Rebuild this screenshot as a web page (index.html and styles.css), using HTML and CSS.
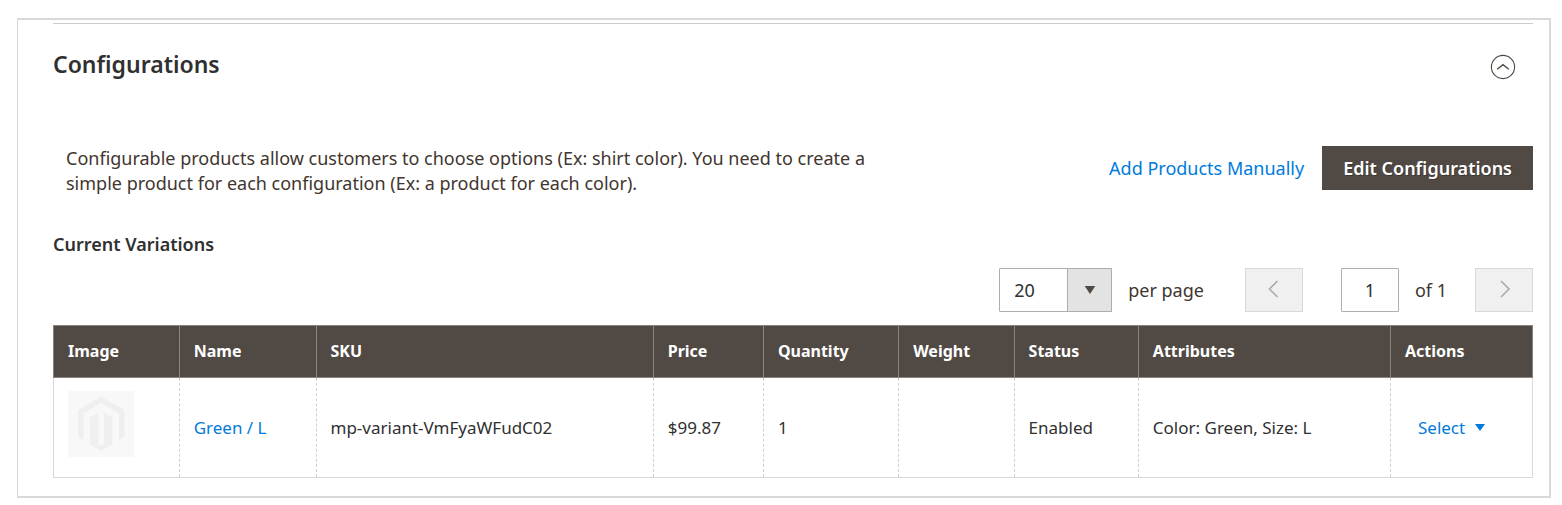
FILE: index.html
```html
<!DOCTYPE html>
<html lang="en">
<head>
<meta charset="utf-8">
<title>Configurations</title>
<meta name="viewport" content="width=device-width, initial-scale=1">
<link rel="stylesheet" href="styles.css">
</head>
<body>
<main class="panel">
  <section class="section">
    <header class="section-header">
      <h1 class="section-title">Configurations</h1>
      <button class="collapse" type="button" aria-label="Collapse section" aria-expanded="true">
        <svg width="26" height="26" viewBox="0 0 26 26" fill="none" stroke="#514943">
          <circle cx="13" cy="13" r="11.6" stroke-width="1.1"/>
          <path d="M7.2 15.3 13 10.6l5.8 4.7" stroke-width="1.4"/>
        </svg>
      </button>
    </header>

    <div class="intro">
      <p class="intro-text">Configurable products allow customers to choose options (Ex: shirt color). You need to create a simple product for each configuration (Ex: a product for each color).</p>
      <div class="intro-actions">
        <button class="link-button" type="button">Add Products Manually</button>
        <button class="dark-button" type="button">Edit Configurations</button>
      </div>
    </div>

    <h2 class="subtitle">Current Variations</h2>

    <div class="toolbar">
      <div class="page-size">
        <div class="select-wrap">
          <select class="select" id="page-size">
            <option>20</option>
            <option>30</option>
            <option>50</option>
          </select>
          <span class="select-arrow"><svg width="12" height="8" viewBox="0 0 12 8"><path d="M.7 0h10.6L6 8z" fill="#514943"/></svg></span>
        </div>
        <label for="page-size">per page</label>
      </div>
      <div class="pager">
        <button class="page-button" type="button" aria-label="Previous page" disabled>
          <svg width="12" height="20" viewBox="0 0 12 20" fill="none" stroke="#adadad" stroke-width="1.7"><path d="M9.500 1 1.500 9l8 8"/></svg>
        </button>
        <div class="page-current">
          <input class="page-input" id="page" type="text" value="1">
          <label for="page">of 1</label>
        </div>
        <button class="page-button" type="button" aria-label="Next page" disabled>
          <svg width="12" height="20" viewBox="0 0 12 20" fill="none" stroke="#adadad" stroke-width="1.7"><path d="M3 1 11 9l-8 8"/></svg>
        </button>
      </div>
    </div>

    <table class="grid">
      <colgroup>
        <col class="col-image"><col class="col-name"><col class="col-sku"><col class="col-price"><col class="col-quantity"><col class="col-weight"><col class="col-status"><col class="col-attributes"><col class="col-actions">
      </colgroup>
      <thead>
        <tr><th>Image</th><th>Name</th><th>SKU</th><th>Price</th><th>Quantity</th><th>Weight</th><th>Status</th><th>Attributes</th><th>Actions</th></tr>
      </thead>
      <tbody>
        <tr>
          <td class="cell-image">
            <svg class="thumb" width="66" height="66" viewBox="0 0 66 66" role="img" aria-label="Product placeholder">
              <path d="M0 0h66v66H0z" fill="#f8f8f8"/>
              <path d="M33 5.500 56.500 19v26.500L51 49V22.500L33 12 15.500 22.500V49L10 45.500V19z" fill="#efefef"/>
              <path d="M22 26.500 30.500 21.500V53l3 1.500 2.500-1.500V21.500L44.500 26.500V53.500L33 60 22 53.500z" fill="#efefef"/>
            </svg>
          </td>
          <td><a class="link" href="#">Green / L</a></td>
          <td>mp-variant-VmFyaWFudC02</td>
          <td>$99.87</td>
          <td>1</td>
          <td></td>
          <td>Enabled</td>
          <td>Color: Green, Size: L</td>
          <td class="cell-actions">
            <button class="action-select" type="button">Select
              <svg width="10" height="7" viewBox="0 0 10 7"><path d="M0 0h10L5 7z" fill="#007bdb"/></svg>
            </button>
          </td>
        </tr>
      </tbody>
    </table>
  </section>
</main>
</body>
</html>
```
FILE: styles.css
```css
* {
  box-sizing: border-box;
}

body {
  margin: 0;
  padding: 18px 11px 7px 17px;
  background: #fff;
  color: #41362f;
  font-family: "Noto Sans", "Open Sans", sans-serif;
  font-size: 18px;
  line-height: 25px;
}

button,
input,
select {
  font: inherit;
  color: inherit;
}

button {
  padding: 0;
  border: 0;
  background: none;
  cursor: pointer;
}

svg {
  display: block;
}

.panel {
  padding: 3px 16px 18px 35px;
  border: 2px solid #d9d9d9;
  border-left-width: 1px;
}

.section {
  border-top: 1px solid #ccc;
}

.section-header {
  display: flex;
  justify-content: space-between;
  align-items: flex-end;
  padding: 24px 17px 0 0;
}

.section-title {
  margin: 0;
  color: #303030;
  font-size: 23px;
  font-weight: 600;
  line-height: 32px;
}

.intro {
  display: flex;
  justify-content: space-between;
  align-items: flex-start;
  margin-top: 66px;
  padding-left: 13px;
}

.intro-text {
  flex: 0 1 58%;
  margin: 0;
}

.intro-actions {
  display: flex;
  align-items: center;
  gap: 18px;
  white-space: nowrap;
}

.link-button {
  color: #007bdb;
}

.dark-button {
  height: 44px;
  padding: 0 20px;
  border: 1px solid #514943;
  background: #514943;
  color: #fff;
  font-weight: 600;
  text-shadow: 1px 1px 0 rgba(0, 0, 0, 0.25);
}

.subtitle {
  margin: 36px 0 11px;
  color: #303030;
  font-size: 18px;
  font-weight: 600;
}

.toolbar,
.page-size,
.pager,
.page-current {
  display: flex;
  align-items: center;
}

.toolbar {
  justify-content: flex-end;
  gap: 41px;
  margin-bottom: 13px;
}

.page-size,
.page-current {
  gap: 16px;
}

.pager {
  gap: 28px;
}

.page-current {
  margin-left: 10px;
}

.select-wrap {
  position: relative;
  width: 113px;
  height: 44px;
}

.select {
  width: 100%;
  height: 100%;
  padding: 0 46px 0 14px;
  border: 1px solid #adadad;
  border-radius: 1px;
  background: #fff;
  color: #303030;
  appearance: none;
}

.select-arrow {
  position: absolute;
  inset: 0 0 0 auto;
  display: grid;
  place-items: center;
  width: 45px;
  border: 1px solid #adadad;
  background: #e3e3e3;
  pointer-events: none;
}

.page-button {
  display: grid;
  place-items: center;
  width: 58px;
  height: 44px;
  border: 1px solid #d9d9d9;
  background: #f0f0f0;
}

.page-input {
  width: 58px;
  height: 44px;
  padding: 0;
  border: 1px solid #adadad;
  border-radius: 1px;
  background: #fff;
  color: #303030;
  text-align: center;
}

.grid {
  width: 100%;
  border-collapse: collapse;
  table-layout: fixed;
  color: #303030;
  font-size: 17px;
  line-height: 22px;
}

.col-image { width: 8.5%; }
.col-name { width: 9.25%; }
.col-sku { width: 22.8%; }
.col-price { width: 7.45%; }
.col-quantity { width: 9.15%; }
.col-weight { width: 7.8%; }
.col-status { width: 8.4%; }
.col-attributes { width: 17.05%; }
.col-actions { width: 9.6%; }

.grid th {
  height: 52px;
  padding: 0 14px 2px;
  border: 1px solid #8a837f;
  background: #514943;
  color: #fff;
  font-size: 16px;
  font-weight: 700;
  text-align: left;
}

.grid td {
  height: 100px;
  padding: 0 14px;
  border: 1px dashed #d0d0d0;
  border-bottom: 1px solid #d9d9d9;
}

.grid td:first-child {
  border-left: 1px solid #d9d9d9;
}

.grid td:last-child {
  border-right: 1px solid #d9d9d9;
}

.grid .cell-image {
  padding: 13px 14px 20px;
}

.grid .cell-actions {
  padding-left: 27px;
}

.link {
  color: #007bdb;
  text-decoration: none;
}

.action-select {
  display: flex;
  align-items: center;
  gap: 10px;
  color: #007bdb;
}
```
